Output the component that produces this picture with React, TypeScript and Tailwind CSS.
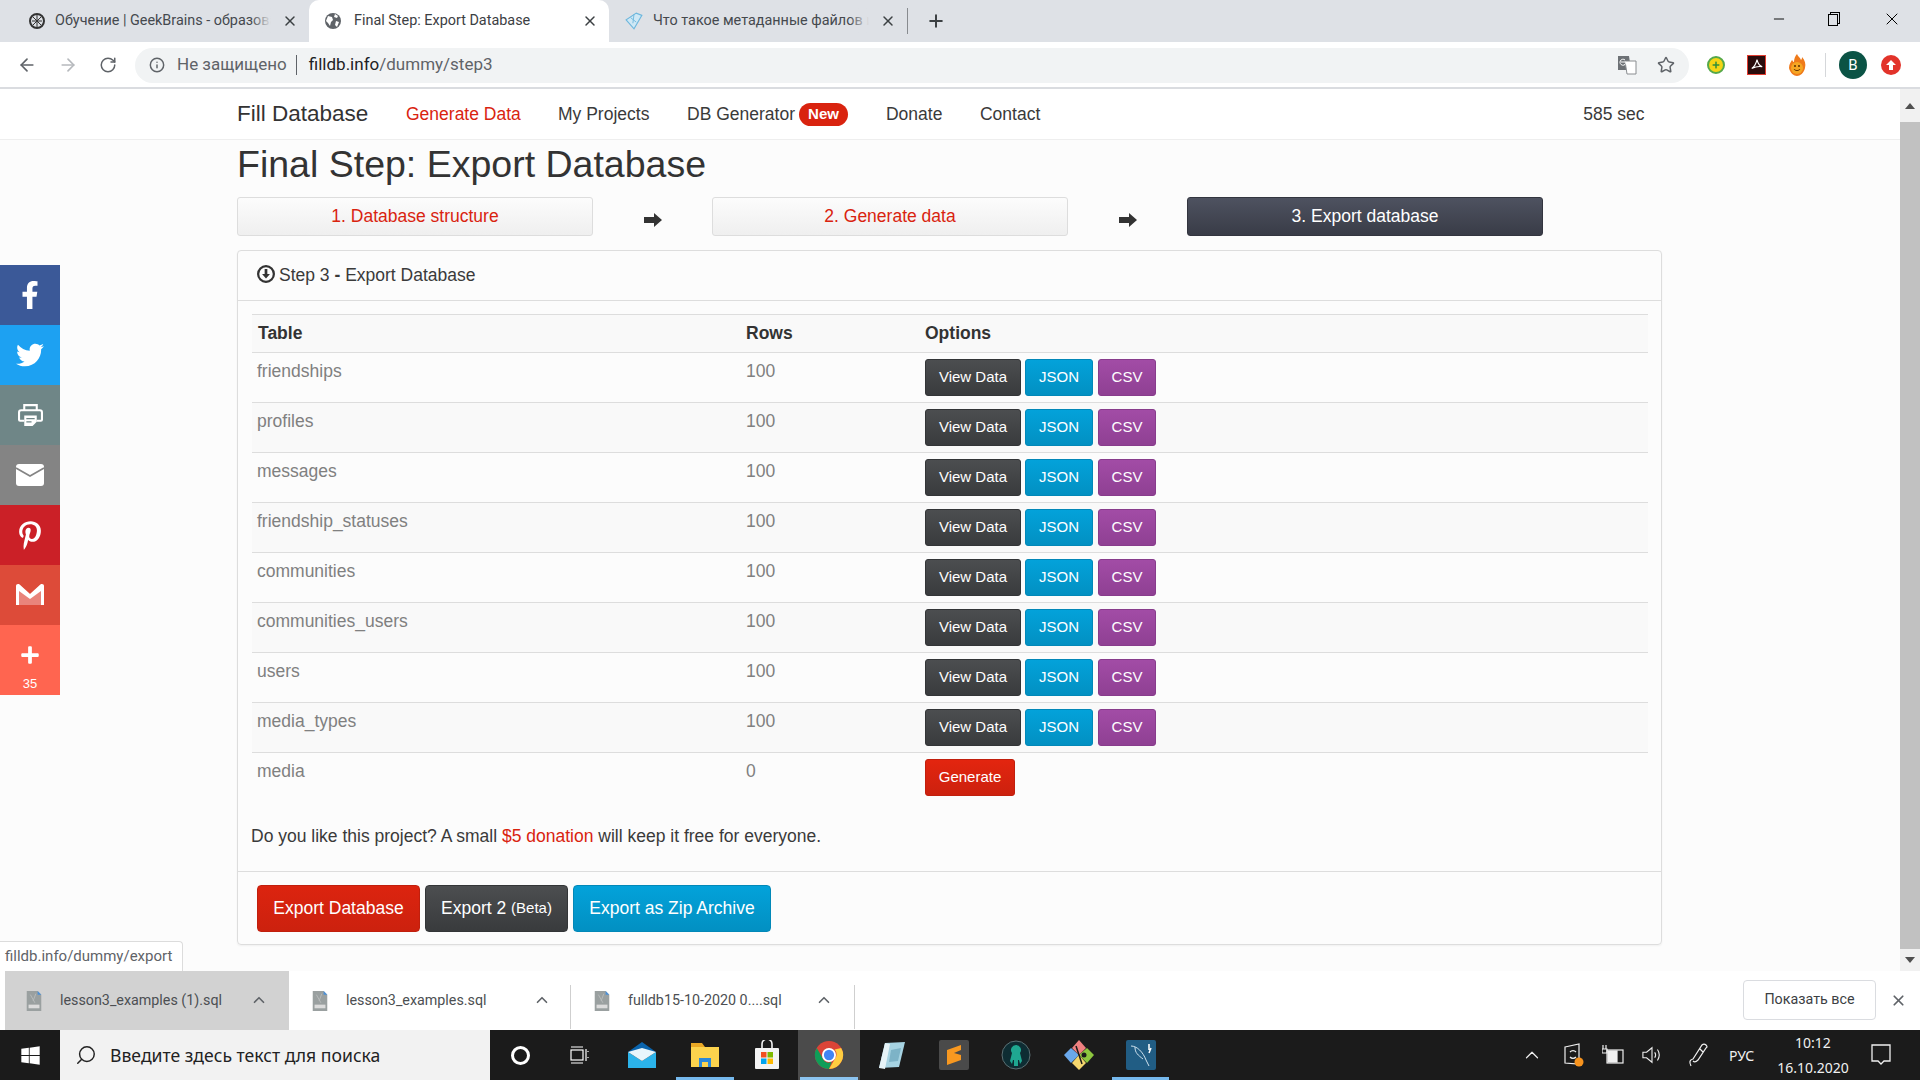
import React from "react";
import { FaFacebookF, FaTwitter, FaPinterestP, FaPlus, FaWindows } from "react-icons/fa";
import { ArrowLeft, ArrowRight, RotateCw, Info, Star, Search, ChevronUp, X, Plus, Minus } from "lucide-react";

const rows = ["friendships", "profiles", "messages", "friendship_statuses", "communities", "communities_users", "users", "media_types"];

function Globe({ className }: { className?: string }) {
  return (
    <svg viewBox="0 0 16 16" className={className}>
      <circle cx="8" cy="8" r="8" fill="#5f6368" />
      <path d="M3 3l4 1 1 3-2 2-1 4-2-3-2-2zM10 1l3 2-1 2-3-1zM11 8l3 1-2 5-2-2z" fill="#fff" />
    </svg>
  );
}

function Tab({ title, active, icon, fade, width, gap }: { title: string; active?: boolean; icon: React.ReactNode; fade?: boolean; width: string; gap: string }) {
  return (
    <div className={`${width} h-[42px] flex items-center shrink-0 relative pl-[16px] ${active ? "bg-white rounded-t-[10px]" : ""}`}>
      <div className="w-[24px] h-[16px] shrink-0 flex items-center">{icon}</div>
      <span className={`flex-1 min-w-0 overflow-hidden whitespace-nowrap text-[14.4px] ${gap} ${active ? "text-[#3c4043]" : "text-[#45494e]"}`}>{title}</span>
      {fade && <div className="absolute right-[38px] top-[8px] w-[20px] h-[26px] bg-gradient-to-r from-transparent to-[#dee1e6]" />}
      <X className="w-[16px] h-[16px] text-[#3c4043] mx-[11px] shrink-0" strokeWidth={2.2} />
    </div>
  );
}

function Btn({ kind, children }: { kind: "dark" | "blue" | "purple" | "red"; children: React.ReactNode }) {
  const styles = {
    dark: "bg-gradient-to-b from-[#4c4e50] to-[#393b3d] border-[#333537] w-[96px]",
    blue: "bg-gradient-to-b from-[#03a2da] to-[#0290c2] border-[#0288b8] w-[68px]",
    purple: "bg-gradient-to-b from-[#a24ca6] to-[#8f4093] border-[#883c8c] w-[58px] ml-[1px]",
    red: "bg-gradient-to-b from-[#e3250f] to-[#cc210e] border-[#c11f0d] w-[90px]",
  };
  return <span className={`inline-flex items-center justify-center h-[37px] rounded-[3px] border text-white text-[15px] ${styles[kind]}`}>{children}</span>;
}

function Step({ children, dark }: { children: React.ReactNode; dark?: boolean }) {
  return (
    <div className={`w-[356px] h-[39px] shrink-0 flex items-center justify-center rounded-[3px] border text-[17.5px] ${dark ? "bg-gradient-to-b from-[#4e5260] to-[#393c47] border-[#33353f] text-white" : "bg-gradient-to-b from-[#fcfcfc] to-[#efefef] border-[#dddddd] text-[#d9230f]"}`}>
      {children}
    </div>
  );
}

function StepArrow() {
  return (
    <div className="w-[119px] flex justify-center pt-[16px]">
      <svg viewBox="0 0 18 14" className="w-[18px] h-[14px]"><path d="M0 4h10V0l8 7-8 7v-4H0z" fill="#333" /></svg>
    </div>
  );
}

function Social({ bg, children }: { bg: string; children: React.ReactNode }) {
  return <div className={`w-[60px] h-[60px] flex items-center justify-center text-white ${bg}`}>{children}</div>;
}

function SqlIcon() {
  return (
    <svg viewBox="0 0 18 22" className="w-[18px] h-[20px] shrink-0">
      <path d="M1 0h12l4 4v18H1z" fill="#9aa0a0" />
      <path d="M13 0l4 4h-4z" fill="#4a90d9" />
      <rect x="3" y="15" width="12" height="4" fill="#dcdcdc" />
      <path d="M5 4l5 9M11 3l-3 8" stroke="#b8bcbc" strokeWidth="1" />
    </svg>
  );
}

function Download({ name, width, active }: { name: string; width: string; active?: boolean }) {
  return (
    <div className={`${width} h-full flex items-center shrink-0 relative ${active ? "bg-[#d2d2d2]" : ""}`}>
      <div className={`flex items-center ${active ? "ml-[20px]" : "ml-[22px]"}`}>
        <SqlIcon />
        <span className="ml-[17px] text-[14.3px] text-[#4c4f52] whitespace-nowrap">{name}</span>
      </div>
      <ChevronUp className={`absolute top-[20px] w-[18px] h-[18px] text-[#5f6368] ${active ? "left-[245px]" : "left-[244px]"}`} strokeWidth={2.2} />
      {!active && <div className="absolute right-0 top-[14px] w-px h-[44px] bg-[#cfcfcf]" />}
    </div>
  );
}

function TaskIcon({ w, children, bg, bar }: { w: string; children: React.ReactNode; bg?: string; bar?: string }) {
  return (
    <div className={`${w} h-full shrink-0 flex items-center justify-center relative ${bg ?? ""}`}>
      {children}
      {bar && <div className={`absolute bottom-0 left-[2px] right-[2px] h-[3px] ${bar}`} />}
    </div>
  );
}

export default function App() {
  return (
    <div className="w-[1920px] h-[1080px] overflow-hidden flex flex-col bg-[#fcfcfc] font-['Liberation_Sans',Arial,sans-serif]">
      {/* Tab strip */}
      <div className="h-[42px] bg-[#dee1e6] flex shrink-0 font-['Roboto',sans-serif]">
        <div className="w-[14px]" />
        <Tab width="w-[295px]" gap="ml-[1px]" fade title="Обучение | GeekBrains - образовательный портал" icon={
          <svg viewBox="0 0 16 16" className="w-[16px] h-[16px] -ml-[1px]"><circle cx="8" cy="8" r="7" fill="none" stroke="#333" strokeWidth="2" /><path d="M3 8h10M8 2v12M4 4l8 8M12 4l-8 8" stroke="#333" strokeWidth="1" /></svg>
        } />
        <Tab width="w-[300px]" gap="ml-[5px]" active title="Final Step: Export Database" icon={<Globe className="w-[16px] h-[16px]" />} />
        <Tab width="w-[298px]" gap="ml-[4px]" fade title="Что такое метаданные файлов и как их удалить" icon={
          <svg viewBox="0 0 16 16" className="w-[18px] h-[18px]"><path d="M1 7l7 8 7-12-5-2z" fill="#cfe8f5" stroke="#6db7dd" strokeWidth="1" /><path d="M5 5l5 4M8 2l-1 8" stroke="#6db7dd" strokeWidth=".8" /></svg>
        } />
        <div className="w-px h-[26px] bg-[#888b8f] mt-[8px]" />
        <div className="w-[55px] flex justify-center items-center"><Plus className="w-[20px] h-[20px] text-[#3c4043]" strokeWidth={2.4} /></div>
        <div className="flex-1" />
        <div className="w-[152px] flex items-center text-black pb-[4px]">
          <Minus className="w-[16px] h-[16px] ml-[3px]" strokeWidth={1.4} />
          <div className="ml-[41px] relative w-[12px] h-[14px]">
            <div className="absolute right-0 top-0 w-[10px] h-[12px] border border-black" />
            <div className="absolute left-0 bottom-0 w-[10px] h-[12px] border border-black bg-[#dee1e6]" />
          </div>
          <X className="w-[20px] h-[20px] ml-[42px]" strokeWidth={1.2} />
        </div>
      </div>

      {/* Toolbar */}
      <div className="h-[47px] bg-white border-b-[2px] border-[#dadce0] flex items-center shrink-0 pt-[1px] font-['Roboto',sans-serif]">
        <ArrowLeft className="w-[20px] h-[20px] ml-[17px] text-[#5f6368]" strokeWidth={2} />
        <ArrowRight className="w-[20px] h-[20px] ml-[21px] text-[#b6b9bd]" strokeWidth={2} />
        <RotateCw className="w-[18px] h-[18px] ml-[21px] text-[#5f6368]" strokeWidth={2} />
        <div className="ml-[18px] w-[1554px] h-[35px] rounded-full bg-[#f1f3f4] flex items-center">
          <Info className="w-[16px] h-[16px] ml-[14px] text-[#5f6368]" strokeWidth={2.2} />
          <span className="ml-[12px] text-[17px] text-[#5f6368]">Не защищено</span>
          <div className="w-px h-[20px] bg-[#5f6368] ml-[9px]" />
          <span className="ml-[12px] text-[17px] text-[#202124]">filldb.info<span className="text-[#5f6368]">/dummy/step3</span></span>
          <div className="flex-1" />
          <svg viewBox="0 0 20 20" className="w-[20px] h-[20px]"><path d="M1 1h11l2 14H1z" fill="#6d7175" /><path d="M8 6h11v13H10z" fill="#fff" stroke="#8a8d90" /><path d="M4 7h5a3 3 0 1 1-1-2M11 10l5 6M16 10l-4 6" stroke="#fff" strokeWidth="1" fill="none" /></svg>
          <Star className="w-[18px] h-[18px] ml-[20px] mr-[14px] text-[#5f6368]" strokeWidth={2} />
        </div>
        <div className="ml-[18px] w-[18px] h-[18px] rounded-full bg-[#f4d516] border-[2px] border-[#55a84a] flex items-center justify-center text-[#2f8f3a]"><FaPlus className="w-[8px] h-[8px]" /></div>
        <div className="ml-[22px] w-[19px] h-[20px] bg-[#2a0c0c] border border-[#e23c30] flex items-center justify-center">
          <svg viewBox="0 0 16 16" className="w-[14px] h-[14px]"><path d="M8 2c-1 4-3 8-6 10 4-2 8-3 12-2-3-1-5-4-6-8z" fill="none" stroke="#fff" strokeWidth="1.2" /></svg>
        </div>
        <svg viewBox="0 0 20 22" className="ml-[21px] w-[20px] h-[22px]"><path d="M10 0c1 3 3 3 4 6 1-1 1-2 1-3 3 3 4 7 3 11-1 5-5 8-8 8s-7-3-8-8c0-4 2-6 3-8 1 1 1 2 2 2 0-3 1-6 3-8z" fill="#ef7a1a" /><circle cx="10" cy="14" r="6" fill="#f5a623" /><path d="M7 15c1 2 5 2 6 0" stroke="#5b2c00" fill="none" /><circle cx="8" cy="12" r="1" fill="#5b2c00" /><circle cx="12" cy="12" r="1" fill="#5b2c00" /></svg>
        <div className="ml-[18px] w-px h-[24px] bg-[#d5d7da]" />
        <div className="ml-[13px] w-[28px] h-[28px] rounded-full bg-[#0b5345] text-white text-[15px] flex items-center justify-center">B</div>
        <div className="ml-[14px] w-[20px] h-[20px] rounded-full bg-[#e2332a] flex items-center justify-center">
          <svg viewBox="0 0 12 12" className="w-[12px] h-[12px]"><path d="M6 1l5 5H8v5H4V6H1z" fill="#fff" /></svg>
        </div>
      </div>

      {/* Viewport */}
      <div className="flex-1 min-h-0 flex relative text-[17.5px] text-[#3a3a3a]">
        <div className="flex-1 min-w-0">
          <div className="h-[51px] bg-white border-b border-[#eeeeee] flex items-center pl-[237px]">
            <span className="text-[22.5px] text-[#333] w-[169px]">Fill Database</span>
            <span className="text-[#d9230f] w-[152px]">Generate Data</span>
            <span className="w-[129px]">My Projects</span>
            <span>DB Generator</span>
            <span className="ml-[4px] h-[23px] w-[49px] rounded-full bg-[#d9230f] text-white text-[15px] font-bold flex items-center justify-center">New</span>
            <span className="ml-[38px] w-[94px]">Donate</span>
            <span>Contact</span>
            <span className="ml-[543px]">585 sec</span>
          </div>

          <div className="pl-[237px] w-[1662px]">
            <h1 className="text-[37.5px] leading-[41px] text-[#333] pt-[4px] h-[57px] whitespace-nowrap">Final Step: Export Database</h1>
            <div className="flex items-start">
              <Step>1. Database structure</Step>
              <StepArrow />
              <Step>2. Generate data</Step>
              <StepArrow />
              <Step dark>3. Export database</Step>
            </div>

            <div className="mt-[14px] h-[695px] w-[1425px] border border-[#dddddd] rounded-[4px] shadow-[0_1px_2px_rgba(0,0,0,0.05)]">
              <div className="h-[50px] border-b border-[#dddddd] flex items-center pl-[19px]">
                <svg viewBox="0 0 16 16" className="w-[18px] h-[18px] mr-[4px] -mt-[3px]"><circle cx="8" cy="8" r="7" fill="none" stroke="#333" strokeWidth="2" /><path d="M6.8 3.5h2.4v4.5h2.3L8 12 4.5 8h2.3z" fill="#333" /></svg>
                <span>Step 3 <b className="font-bold">-</b> Export Database</span>
              </div>

              <div className="pt-[13px] pl-[14px] pr-[13px] h-[570px]">
                <table className="w-[1396px] table-fixed border-collapse">
                  <colgroup>
                    <col className="w-[488px]" />
                    <col className="w-[179px]" />
                    <col />
                  </colgroup>
                  <tbody>
                    <tr className="bg-[#f9f9f9] border-t border-[#dddddd] text-[#333] font-bold text-left">
                      <td className="px-[6px] py-[6px] leading-[25px] h-[38px] align-top">Table</td>
                      <td className="px-[6px] py-[6px] leading-[25px] align-top">Rows</td>
                      <td className="px-[6px] py-[6px] leading-[25px] align-top">Options</td>
                    </tr>
                    {rows.map((r, i) => (
                      <tr key={r} className={`border-t border-[#dddddd] text-[#808080] ${i % 2 === 1 ? "bg-[#f9f9f9]" : ""}`}>
                        <td className="px-[5px] pt-[6px] pb-[6px] leading-[25px] align-top">{r}</td>
                        <td className="px-[6px] pt-[6px] pb-[6px] leading-[25px] align-top">100</td>
                        <td className="px-[6px] py-[6px] align-top h-[50px]">
                          <div className="flex gap-[4px] h-[37px]">
                            <Btn kind="dark">View Data</Btn>
                            <Btn kind="blue">JSON</Btn>
                            <Btn kind="purple">CSV</Btn>
                          </div>
                        </td>
                      </tr>
                    ))}
                    <tr className="border-t border-[#dddddd] text-[#808080]">
                      <td className="px-[5px] pt-[6px] pb-[6px] leading-[25px] align-top">media</td>
                      <td className="px-[6px] pt-[6px] pb-[6px] leading-[25px] align-top">0</td>
                      <td className="px-[6px] py-[6px] align-top h-[50px]"><div className="flex h-[37px]"><Btn kind="red">Generate</Btn></div></td>
                    </tr>
                  </tbody>
                </table>
                <p className="leading-[25px] mt-[21px] -ml-[1px] text-[#3a3a3a]">Do you like this project? A small <span className="text-[#d9230f]">$5 donation</span> will keep it free for everyone.</p>
              </div>

              <div className="border-t border-[#dddddd] h-[73px] pl-[19px] pt-[13px] flex gap-[5px] items-start text-white text-[17.5px]">
                <span className="w-[163px] h-[47px] rounded-[4px] flex items-center justify-center bg-gradient-to-b from-[#dc240f] to-[#cc210e] border border-[#c11f0d]">Export Database</span>
                <span className="w-[143px] h-[47px] rounded-[4px] flex items-center justify-center bg-gradient-to-b from-[#4c4e50] to-[#393b3d] border border-[#333537]">Export 2&nbsp;<small className="text-[15px]">(Beta)</small></span>
                <span className="w-[198px] h-[47px] rounded-[4px] flex items-center justify-center bg-gradient-to-b from-[#03a2da] to-[#0290c2] border border-[#0288b8]">Export as Zip Archive</span>
              </div>
            </div>
          </div>
        </div>

        {/* Scrollbar */}
        <div className="w-[20px] shrink-0 bg-[#f1f1f1] flex flex-col items-center">
          <div className="h-[33px] flex items-center"><div className="w-0 h-0 border-l-[5px] border-r-[5px] border-b-[6px] border-l-transparent border-r-transparent border-b-[#505050]" /></div>
          <div className="flex-1 w-full bg-[#c1c1c1]" />
          <div className="h-[22px] flex items-center"><div className="w-0 h-0 border-l-[5px] border-r-[5px] border-t-[6px] border-l-transparent border-r-transparent border-t-[#505050]" /></div>
        </div>

        {/* Social share bar */}
        <div className="absolute left-0 top-[176px] w-[60px]">
          <Social bg="bg-[#3b5998]"><FaFacebookF className="w-[26px] h-[28px]" /></Social>
          <Social bg="bg-[#1da1f2]"><FaTwitter className="w-[28px] h-[28px]" /></Social>
          <Social bg="bg-[#6f8687]">
            <svg viewBox="0 0 24 22" className="w-[25px] h-[23px]" fill="none" stroke="#fff" strokeWidth="2"><path d="M6 6V1h12v5" /><path d="M6 16H2q-1 0-1-1V8q0-2 2-2h18q2 0 2 2v7q0 1-1 1h-4" /><path d="M6 11h12v6l-4 4H6z" fill="#fff" stroke="none" /><path d="M8 14h8M8 17h5" stroke="#6f8687" strokeWidth="1.2" /></svg>
          </Social>
          <Social bg="bg-[#848484]">
            <svg viewBox="0 0 28 22" className="w-[28px] h-[22px]"><rect width="28" height="22" rx="3" fill="#fff" /><path d="M0 4l14 8 14-8" fill="none" stroke="#848484" strokeWidth="1.6" /></svg>
          </Social>
          <Social bg="bg-[#cb2027]"><FaPinterestP className="w-[26px] h-[29px]" /></Social>
          <Social bg="bg-[#dd4b39]">
            <svg viewBox="0 0 28 22" className="w-[28px] h-[22px]"><path d="M0 1h4l10 9 10-9h4v20H0z" fill="#e9847b" /><path d="M0 2q0-2 2-2h1l11 10L25 0h1q2 0 2 2v19h-3V7L14 15 3 7v14H0z" fill="#fff" /></svg>
          </Social>
          <div className="w-[60px] h-[70px] bg-[#ff6550] text-white flex flex-col items-center pt-[20px]">
            <FaPlus className="w-[20px] h-[20px]" />
            <span className="text-[13px] leading-[15px] mt-[11px]">35</span>
          </div>
        </div>

        {/* Status bubble */}
        <div className="absolute left-0 bottom-0 h-[30px] w-[183px] bg-white border-t border-r border-[#dcdcdc] rounded-tr-[4px] pl-[5px] text-[15px] leading-[28px] text-[#5f6368] font-['Roboto',sans-serif]">filldb.info/dummy/export</div>
      </div>

      {/* Downloads */}
      <div className="h-[59px] bg-white shrink-0 flex pl-[5px] font-['Roboto',sans-serif]">
        <Download width="w-[284px]" active name="lesson3_examples (1).sql" />
        <Download width="w-[282px]" name="lesson3_examples.sql" />
        <Download width="w-[284px]" name="fulldb15-10-2020 0....sql" />
        <div className="flex-1" />
        <div className="w-[133px] h-[40px] mt-[9px] rounded-[4px] border border-[#dadce0] flex items-center justify-center text-[14.3px] text-[#3c4043]">Показать все</div>
        <X className="w-[17px] h-[17px] text-[#5f6368] mt-[21px] ml-[14px] mr-[13px]" strokeWidth={2.4} />
      </div>

      {/* Taskbar */}
      <div className="h-[50px] bg-[#1b1b1b] shrink-0 flex items-stretch text-white font-['Noto_Sans',sans-serif]">
        <div className="w-[60px] flex items-center justify-center"><FaWindows className="w-[21px] h-[21px]" /></div>
        <div className="w-[430px] bg-[#f2f2f2] flex items-center text-[#222]">
          <Search className="w-[22px] h-[22px] ml-[15px] -scale-x-100" strokeWidth={1.6} />
          <span className="ml-[13px] text-[17.6px]">Введите здесь текст для поиска</span>
        </div>
        <TaskIcon w="w-[60px]"><div className="w-[19px] h-[19px] rounded-full border-[3px] border-white" /></TaskIcon>
        <TaskIcon w="w-[60px]">
          <svg viewBox="0 0 20 20" className="w-[20px] h-[20px]" fill="none" stroke="#fff" strokeWidth="1.2"><rect x="1" y="5" width="12" height="10" /><path d="M1 2h12M1 18h12M16 4v12M18 6v1M18 12v1" /></svg>
        </TaskIcon>
        <TaskIcon w="w-[64px]">
          <svg viewBox="0 0 30 30" className="w-[30px] h-[30px]"><path d="M15 2L1 12h28z" fill="#0a64ad" /><path d="M1 12v16h28V12L15 21z" fill="#2bb3ea" /><path d="M1 12l14 9 14-9-14-4z" fill="#e8f6fc" /></svg>
        </TaskIcon>
        <TaskIcon w="w-[62px]" bar="bg-[#76b9ed]">
          <svg viewBox="0 0 30 28" className="w-[30px] h-[28px]"><path d="M1 2h11l3 4H1z" fill="#e9a825" /><rect x="1" y="6" width="28" height="20" fill="#fcd34d" /><path d="M9 26v-9h12v9h-3v-5h-6v5z" fill="#2b88d8" /></svg>
        </TaskIcon>
        <TaskIcon w="w-[62px]">
          <svg viewBox="0 0 26 30" className="w-[26px] h-[30px]"><rect x="1" y="8" width="24" height="21" rx="1" fill="#f4f4f4" /><path d="M8 10V4a5 5 0 0 1 10 0v6" fill="none" stroke="#f4f4f4" strokeWidth="1.6" /><rect x="7" y="12" width="5.5" height="5.5" fill="#f25022" /><rect x="13.5" y="12" width="5.5" height="5.5" fill="#7fba00" /><rect x="7" y="18.5" width="5.5" height="5.5" fill="#00a4ef" /><rect x="13.5" y="18.5" width="5.5" height="5.5" fill="#ffb900" /></svg>
        </TaskIcon>
        <TaskIcon w="w-[62px]" bg="bg-[#4b4b4b]" bar="bg-[#8cc4f0]">
          <svg viewBox="0 0 32 32" className="w-[30px] h-[30px]"><circle cx="16" cy="16" r="15" fill="#db4437" /><path d="M16 31A15 15 0 0 1 3 8.5l7.8 13.5A6 6 0 0 0 19 23l-3 8z" fill="#0f9d58" /><path d="M29 8.5A15 15 0 0 1 16 31l7.5-13A8 8 0 0 0 22 10z" fill="#ffcd40" /><circle cx="16" cy="16" r="7.5" fill="#fff" /><circle cx="16" cy="16" r="5.5" fill="#4285f4" /></svg>
        </TaskIcon>
        <TaskIcon w="w-[62px]">
          <svg viewBox="0 0 30 30" className="w-[30px] h-[30px]"><path d="M9 3l20-1-6 25-20 1z" fill="#a6d3e2" /><path d="M9 3l-6 25 6 1 5-25z" fill="#e6f3f7" /><path d="M15 10l10-2-3 13-9 1z" fill="#7db3c7" /></svg>
        </TaskIcon>
        <TaskIcon w="w-[63px]">
          <svg viewBox="0 0 30 30" className="w-[30px] h-[30px]"><rect width="30" height="30" rx="2" fill="#4a4a4a" /><path d="M22 5L8 10v6l14 4v-5l-7-2 7-3zM8 25l14-5v-5L8 11z" fill="#f89820" /></svg>
        </TaskIcon>
        <TaskIcon w="w-[62px]">
          <svg viewBox="0 0 30 30" className="w-[30px] h-[30px]"><circle cx="15" cy="15" r="14" fill="#0e2d33" stroke="#5b6e72" /><path d="M15 5a5 5 0 0 1 4 8l2 8-2 3-1-4h-1v6h-4v-6h-1l-1 4-2-3 2-8a5 5 0 0 1 4-8z" fill="#1fa891" /></svg>
        </TaskIcon>
        <TaskIcon w="w-[63px]">
          <svg viewBox="0 0 30 30" className="w-[30px] h-[30px]"><path d="M15 0l7 8-7 7-7-7z" fill="#ef8080" /><path d="M0 15l7-7 8 7-8 8z" fill="#6aa8ec" /><path d="M30 15l-7-7-8 7 8 8z" fill="#8dc63f" /><path d="M15 15l7 8-7 7-7-7z" fill="#f5d76e" /><circle cx="20" cy="15" r="2.5" fill="#1b1b1b" /><path d="M12 6l6 18" stroke="#1b1b1b" strokeWidth="1.5" /></svg>
        </TaskIcon>
        <TaskIcon w="w-[61px]" bar="bg-[#76b9ed]">
          <svg viewBox="0 0 30 30" className="w-[30px] h-[30px]"><rect width="30" height="30" rx="2" fill="#215d84" /><path d="M5 6c6 0 12 6 15 14l3 6M9 7c0 6 3 8 8 12" fill="none" stroke="#cfe2ee" strokeWidth="1" /><path d="M23 4v6M25 8l-2 5" stroke="#fff" strokeWidth="1.5" /></svg>
        </TaskIcon>
        <div className="flex-1" />
        <div className="flex items-center relative w-[410px] shrink-0 text-[#f0f0f0]">
          <ChevronUp className="w-[22px] h-[22px] ml-[11px]" strokeWidth={1.3} />
          <svg viewBox="0 0 22 24" className="w-[22px] h-[24px] ml-[20px]" fill="none" stroke="#f0f0f0" strokeWidth="1.2"><path d="M2 4l14-3v20l-14-1zM7 9a4 4 0 0 1 6 0M13 14a4 4 0 0 1-6 0" /><circle cx="16" cy="19" r="4.5" fill="#f7931e" stroke="none" /></svg>
          <svg viewBox="0 0 22 20" className="w-[22px] h-[20px] ml-[17px]" fill="none" stroke="#f0f0f0" strokeWidth="1.2"><rect x="5" y="5" width="16" height="13" /><rect x="6" y="6" width="9" height="11" fill="#f0f0f0" /><path d="M1 0v4M4 0v4M0 4h5v4H0z" /></svg>
          <svg viewBox="0 0 22 20" className="w-[20px] h-[20px] ml-[18px]" fill="none" stroke="#f0f0f0" strokeWidth="1.2"><path d="M1 7h4l6-5v16l-6-5H1zM14 7q2 3 0 6M17 4q4 6 0 12" /></svg>
          <svg viewBox="0 0 20 24" className="w-[22px] h-[24px] ml-[25px]" fill="none" stroke="#f0f0f0" strokeWidth="1.2"><path d="M3 23q-3-6 2-7l9-14q2-2 4 0t0 3l-8 12q-3 3-5 1M12 6l3 3" /></svg>
          <span className="ml-[20px] text-[14px] w-[42px]">РУС</span>
          <div className="ml-[7px] w-[70px] flex flex-col items-center text-[14px] leading-[25px]">
            <span>10:12</span>
            <span>16.10.2020</span>
          </div>
          <svg viewBox="0 0 22 24" className="ml-[22px] w-[22px] h-[24px]" fill="none" stroke="#f0f0f0" strokeWidth="1.3"><path d="M2 2h18v16h-6l-3 3-3-3H2z" /></svg>
        </div>
      </div>
    </div>
  );
}
